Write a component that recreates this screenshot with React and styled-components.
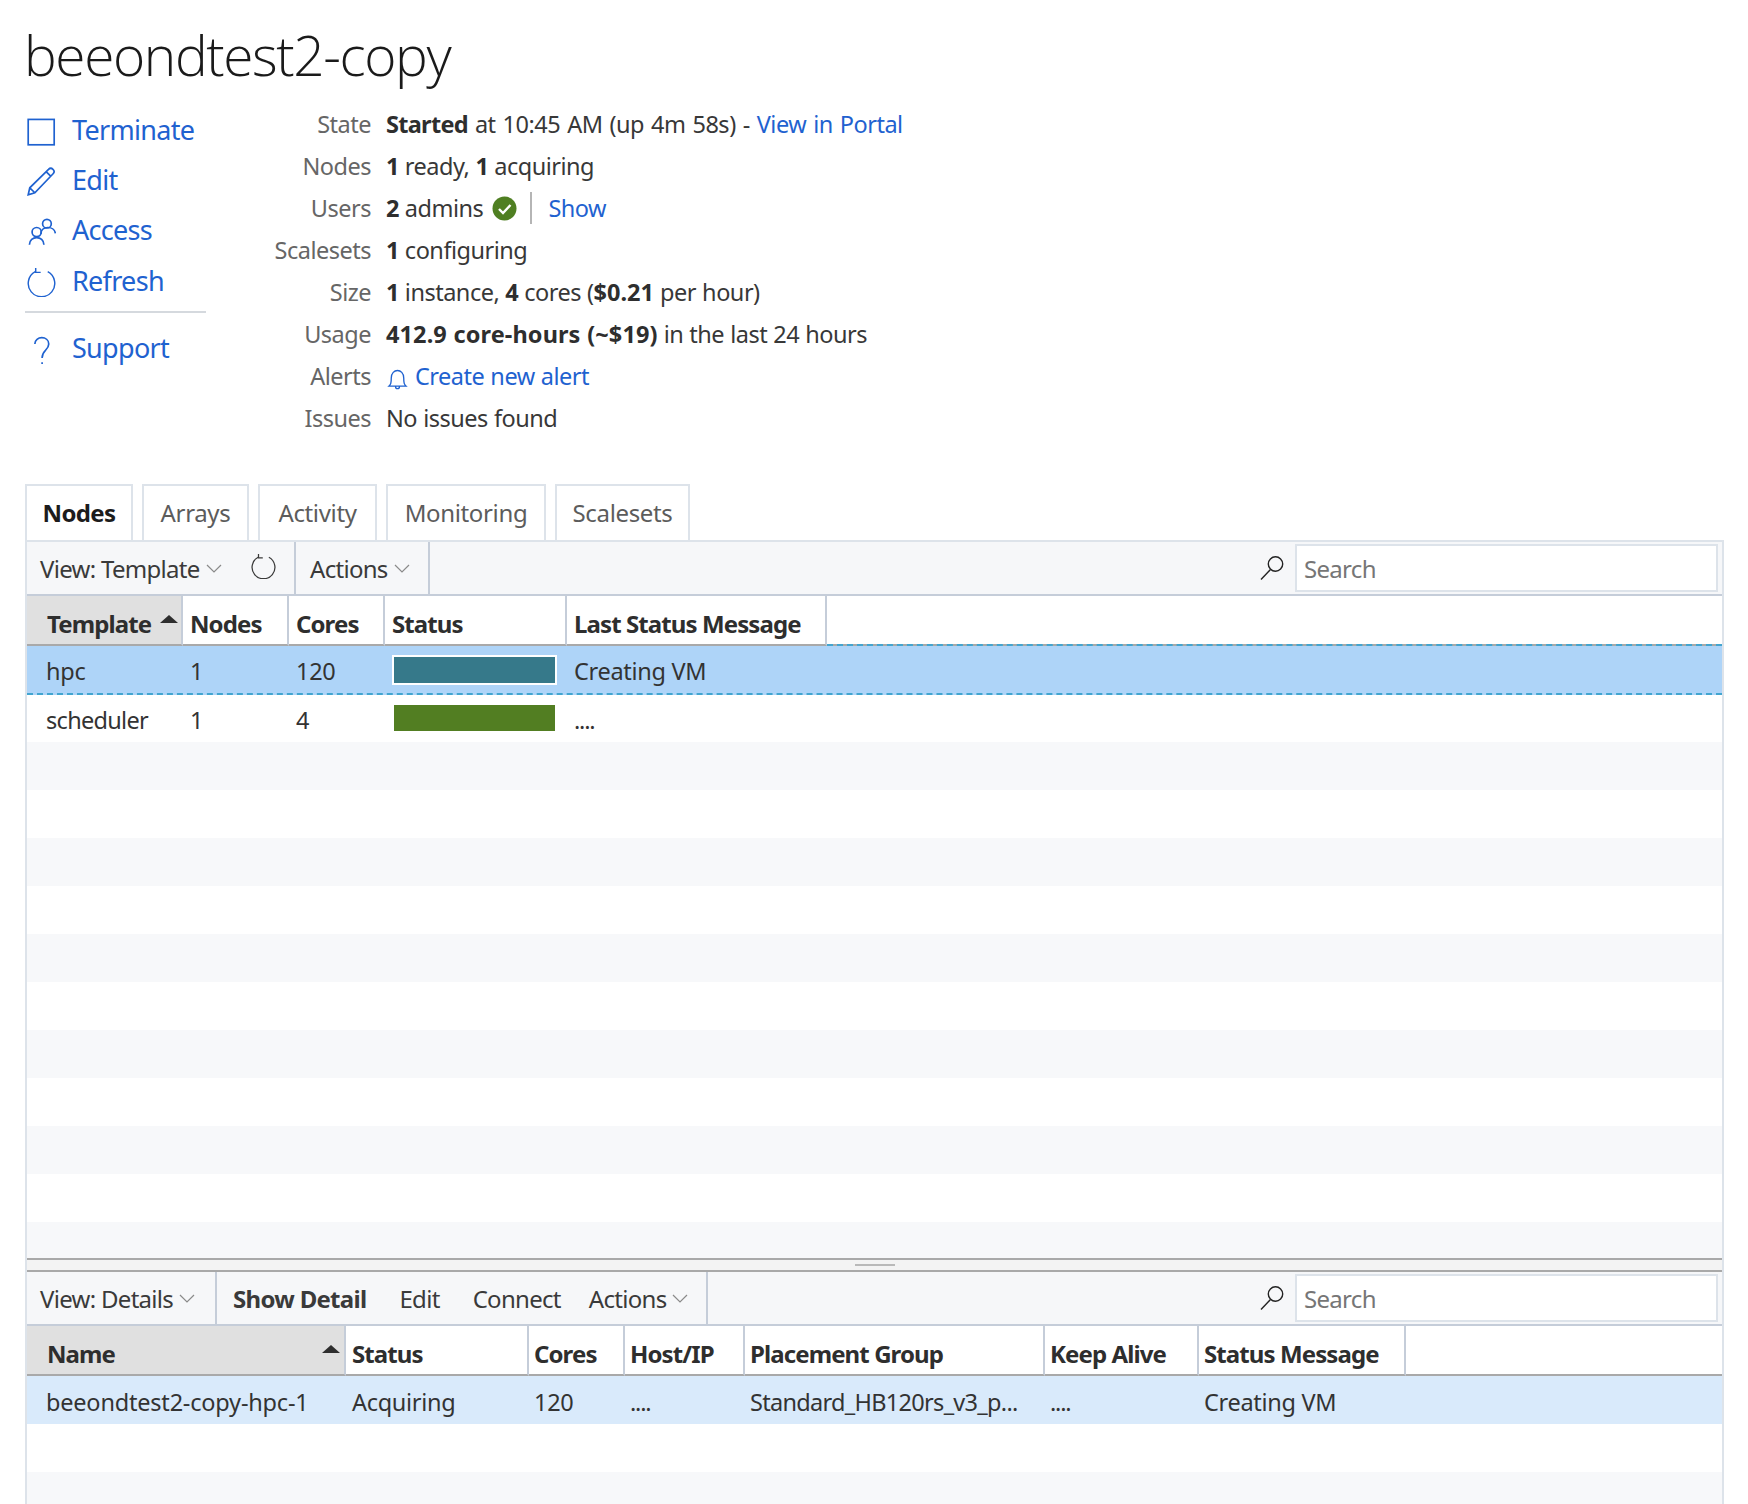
import React from 'react'
import styled, { createGlobalStyle } from 'styled-components'

const Global = createGlobalStyle`
  html, body { margin: 0; padding: 0; background: #fff; }
  body { font-family: "Noto Sans", "Open Sans", "Liberation Sans", sans-serif; color: #333; overflow: hidden; }
  * { box-sizing: border-box; }
`
const Page = styled.div`
  width: 1748px;
  height: 1504px;
  padding: 0 24px 0 25px;
  overflow: hidden;
`
const Title = styled.h1`
  margin: 0 0 0 -1px;
  height: 102px;
  padding-top: 17px;
  font-family: "Open Sans", sans-serif;
  font-size: 55px;
  line-height: 76px;
  font-weight: 300;
  letter-spacing: -1.4px;
  color: #1a1a1a;
`
const Summary = styled.div`
  display: flex;
  height: 382px;
`
const SideMenu = styled.div`
  width: 181px;
  padding-top: 2px;
`
const SideItem = styled.a`
  display: flex;
  align-items: center;
  gap: 16px;
  height: 50.4px;
  padding-left: 2px;
  font-size: 27px;
  letter-spacing: -0.7px;
  color: #1f62d0;
  svg { width: 29px; height: 29px; flex: none; margin-top: 4px; }
`
const SideRule = styled.div`
  height: 2px;
  margin: 5px 0 10px;
  background: #d5d9de;
`
const Props = styled.div`
  display: grid;
  grid-template-columns: 165px auto;
  grid-auto-rows: 42px;
  column-gap: 15px;
  justify-content: start;
  margin-top: 1px;
  font-size: 23.5px;
  letter-spacing: -0.5px;
  word-spacing: 0.5px;
  line-height: 42px;
`
const Label = styled.div`
  text-align: right;
  color: #666;
`
const Value = styled.div`
  display: flex;
  align-items: center;
  white-space: pre;
  color: #383838;
  word-spacing: ${p => p.$ws ?? 0.5}px;
`
const Strong = styled.b`
  font-weight: 700;
  color: #2e2e2e;
  letter-spacing: ${p => p.$ls ?? -0.7}px;
`
const Link = styled.a`
  color: #1f62d0;
`
const BellLink = styled.span`
  display: inline-flex;
  margin-right: 6px;
  margin-top: 4px;
  color: #1f62d0;
`
const UserCheck = styled.svg`
  margin-left: 3px;
`
const VBar = styled.span`
  display: inline-block;
  width: 2px;
  height: 32px;
  margin: 0 16px 0 13px;
  background: #b5b5b5;
`
const Tabs = styled.div`
  display: flex;
  gap: 9px;
  height: 56px;
`
const Tab = styled.div`
  width: ${p => p.$w}px;
  height: 56px;
  border: 2px solid #dde3ea;
  border-bottom: none;
  text-align: center;
  line-height: 54px;
  font-size: 24px;
  letter-spacing: ${p => (p.$active ? -0.6 : -0.35)}px;
  font-weight: ${p => (p.$active ? 700 : 400)};
  color: ${p => (p.$active ? '#1c1c1c' : '#5c5c5c')};
`
const Panel = styled.div`
  border-left: 2px solid #dde3ea;
  border-right: 2px solid #dde3ea;
  border-top: 2px solid #dde3ea;
`
const Toolbar = styled.div`
  display: flex;
  align-items: center;
  height: 54px;
  background: #f6f7f9;
  border-bottom: 2px solid #c5cdd9;
  font-size: 24px;
  letter-spacing: -0.7px;
  color: #3a3a3a;
`
const ToolGroup = styled.div`
  display: flex;
  align-items: center;
  height: 100%;
  width: ${p => p.$w}px;
  padding-left: ${p => p.$pad}px;
  gap: ${p => p.$gap || 0}px;
  border-right: 2px solid #c5cdd9;
`
const ToolItem = styled.span`
  display: inline-flex;
  align-items: center;
  margin-left: ${p => p.$ml || 0}px;
  font-weight: ${p => (p.$bold ? 700 : 400)};
  white-space: nowrap;
  svg { margin-left: 6px; }
`
const RefreshBtn = styled.span`
  display: inline-flex;
  margin-left: 29px;
  margin-top: -4px;
`
const SearchWrap = styled.div`
  margin-left: auto;
  display: flex;
  align-items: center;
  gap: 10px;
  padding-right: 4px;
`
const SearchBox = styled.div`
  width: 423px;
  height: 48px;
  border: 2px solid #dde3ea;
  background: #fff;
  padding-left: 7px;
  line-height: 46px;
  color: #767676;
`
const HeadRow = styled.div`
  display: flex;
  height: 50px;
`
const HeadCell = styled.div`
  position: relative;
  width: ${p => p.$w}px;
  flex: none;
  padding-left: ${p => p.$pad || 5}px;
  border-right: 2px solid #c5cdd9;
  border-bottom: 2px solid #a9a9a9;
  background: ${p => (p.$sorted ? '#e0e0e0' : '#fff')};
  font-size: 24px;
  letter-spacing: -0.9px;
  font-weight: 700;
  line-height: 56px;
  white-space: nowrap;
  color: #2e2e2e;
`
const SortMark = styled.span`
  position: absolute;
  right: ${p => p.$right}px;
  top: 19px;
  width: 0;
  height: 0;
  border-left: 9px solid transparent;
  border-right: 9px solid transparent;
  border-bottom: 8px solid #2e2e2e;
`
const HeadFill = styled.div`
  flex: 1;
  border-bottom: 2px ${p => (p.$dashed ? 'dashed #42a5d0' : 'solid #a9a9a9')};
  background: linear-gradient(#a9a9a9, #a9a9a9) bottom / 100% 2px no-repeat;
  background-origin: border-box;
`
const Body = styled.div`
  height: ${p => p.$h}px;
  overflow: hidden;
`
const Row = styled.div`
  position: relative;
  display: flex;
  align-items: center;
  height: ${p => (p.$dashed ? 49 : 48)}px;
  margin-bottom: ${p => (p.$dashed ? -1 : 0)}px;
  z-index: ${p => (p.$dashed ? 1 : 0)};
  background: ${p => p.$bg || '#fff'};
  font-size: 23.5px;
  letter-spacing: -0.3px;
  color: #333;
  border-bottom: ${p => (p.$dashed ? '2px dashed #42a5d0' : 'none')};
`
const Cell = styled.div`
  width: ${p => p.$w}px;
  flex: none;
  padding-left: ${p => p.$pad}px;
  padding-top: 3px;
  white-space: nowrap;
  letter-spacing: ${p => p.$ls ?? -0.3}px;
`
const BarCell = styled.div`
  width: ${p => p.$w}px;
  flex: none;
  padding-left: 9px;
`
const StatusBar = styled.div`
  width: 161px;
  height: 26px;
  background: ${p => p.$color};
  box-shadow: ${p => (p.$outlined ? '0 0 0 2px #fff' : 'none')};
`
const Splitter = styled.div`
  height: 14px;
  border-top: 2px solid #a9a9a9;
  border-bottom: 2px solid #a9a9a9;
  background: #f3f3f3;
  display: flex;
  justify-content: center;
  align-items: center;
`
const Grip = styled.div`
  width: 40px;
  height: 2px;
  background: #b9b9b9;
`

const Ico = ({ size = 24, children, sw = 1.4 }) => (
  <svg width={size} height={size} viewBox="0 0 24 24" fill="none" stroke="currentColor" strokeWidth={sw}>{children}</svg>
)
const Chevron = () => (
  <svg width="16" height="9" viewBox="0 0 16 9" fill="none" stroke="#8a8a8a" strokeWidth="1.2"><path d="M1 1l7 7 7-7" /></svg>
)
const Refresh = ({ size = 28 }) => (
  <svg width={size} height={size} viewBox="0 0 28 28" fill="none" stroke="currentColor" strokeWidth="1.4">
    <path d="M8 3.600A12.800 12.800 0 1 0 20 3.600" />
    <path d="M8.400 0v4.200h4.800" />
  </svg>
)
const Magnifier = () => (
  <svg width="26" height="26" viewBox="0 0 26 26" fill="none" stroke="#222" strokeWidth="1.4">
    <circle cx="16.5" cy="9" r="7.2" />
    <path d="M11.5 14.5L2 24.5" />
  </svg>
)

const side = [
  ['Terminate', <Ico key="t"><rect x="1" y="2" width="21.500" height="21" /></Ico>],
  ['Edit', <Ico key="e"><path d="M1 23l1.300-5.800L17.800 2a2.500 2.500 0 0 1 3.800 3.600L6.500 21.300zM2.300 17.200l4.200 4.100M16 4l4 4" /></Ico>],
  ['Access', <Ico key="a"><circle cx="16.500" cy="5.500" r="3.600" /><path d="M11.500 14c0-7 11-7 12-.500" /><circle cx="8" cy="12.500" r="3.800" /><path d="M2 23c0-8 12-8 12 0" /></Ico>],
  ['Refresh', <Refresh key="r" />],
]

const topCols = [156, 106, 96, 182, 260]
const bottomCols = [319, 183, 96, 120, 300, 154, 207]

const App = () => (
  <Page>
    <Global />
    <Title>beeondtest2-copy</Title>
    <Summary>
      <SideMenu>
        {side.map(([name, icon]) => (
          <SideItem key={name}>{icon}{name}</SideItem>
        ))}
        <SideRule />
        <SideItem>
          <Ico><path d="M6.500 7.500C6.500 .500 18 .500 18 7.500c0 5-5.500 5-5.500 11.500M12.500 22.500v1.500" /></Ico>
          Support
        </SideItem>
      </SideMenu>
      <Props>
        <Label>State</Label>
        <Value $ws={1.4}><Strong>Started</Strong> at 10:45 AM (up 4m 58s) - <Link>View in Portal</Link></Value>
        <Label>Nodes</Label>
        <Value><Strong>1</Strong> ready, <Strong>1</Strong> acquiring</Value>
        <Label>Users</Label>
        <Value>
          <Strong>2</Strong> admins{' '}
          <UserCheck width="25" height="25" viewBox="0 0 25 25">
            <circle cx="12.500" cy="12.500" r="12" fill="#4f7f22" />
            <path d="M7 13l4 4 7.500-8" fill="none" stroke="#fff" strokeWidth="2.400" />
          </UserCheck>
          <VBar /><Link>Show</Link>
        </Value>
        <Label>Scalesets</Label>
        <Value><Strong>1</Strong> configuring</Value>
        <Label>Size</Label>
        <Value><Strong>1</Strong> instance, <Strong>4</Strong> cores (<Strong $ls={0}>$0.21</Strong> per hour)</Value>
        <Label>Usage</Label>
        <Value><Strong $ls={0.1}>412.9 core-hours (~$19)</Strong> in the last 24 hours</Value>
        <Label>Alerts</Label>
        <Value>
          <BellLink>
            <Ico size={23} sw={1.4}><path d="M3 20h18c-2-2-2.500-3-2.500-8.500C18.500 1 5.500 1 5.500 11.500 5.500 17 5 18 3 20zM10 20.500a2 2 0 0 0 4 0" /></Ico>
          </BellLink>
          <Link>Create new alert</Link>
        </Value>
        <Label>Issues</Label>
        <Value>No issues found</Value>
      </Props>
    </Summary>

    <Tabs>
      <Tab $w={108} $active>Nodes</Tab>
      <Tab $w={107}>Arrays</Tab>
      <Tab $w={119}>Activity</Tab>
      <Tab $w={160}>Monitoring</Tab>
      <Tab $w={135}>Scalesets</Tab>
    </Tabs>

    <Panel>
      <Toolbar>
        <ToolGroup $w={269} $pad={13}>
          <ToolItem>View: Template<Chevron /></ToolItem>
          <RefreshBtn><Refresh size={25} /></RefreshBtn>
        </ToolGroup>
        <ToolGroup $w={134} $pad={14}>
          <ToolItem>Actions<Chevron /></ToolItem>
        </ToolGroup>
        <SearchWrap><Magnifier /><SearchBox>Search</SearchBox></SearchWrap>
      </Toolbar>
      <HeadRow>
        <HeadCell $w={topCols[0]} $sorted $pad={20}>Template<SortMark $right={3} /></HeadCell>
        <HeadCell $w={topCols[1]} $pad={7}>Nodes</HeadCell>
        <HeadCell $w={topCols[2]} $pad={7}>Cores</HeadCell>
        <HeadCell $w={topCols[3]} $pad={7}>Status</HeadCell>
        <HeadCell $w={topCols[4]} $pad={7}>Last Status Message</HeadCell>
        <HeadFill $dashed />
      </HeadRow>
      <Body $h={612}>
        <Row $bg="#aed4f8" $dashed>
          <Cell $w={topCols[0]} $pad={19}>hpc</Cell>
          <Cell $w={topCols[1]} $pad={7}>1</Cell>
          <Cell $w={topCols[2]} $pad={7}>120</Cell>
          <BarCell $w={topCols[3]}><StatusBar $color="#36798a" $outlined /></BarCell>
          <Cell $w={topCols[4]} $pad={7}>Creating VM</Cell>
        </Row>
        <Row>
          <Cell $w={topCols[0]} $pad={19} $ls={-0.7}>scheduler</Cell>
          <Cell $w={topCols[1]} $pad={7}>1</Cell>
          <Cell $w={topCols[2]} $pad={7}>4</Cell>
          <BarCell $w={topCols[3]}><StatusBar $color="#527e22" /></BarCell>
          <Cell $w={topCols[4]} $pad={7} $ls={-1.2}>....</Cell>
        </Row>
        {Array.from({ length: 11 }, (_, i) => (
          <Row key={i} $bg={i % 2 === 0 ? '#f7f8fa' : '#fff'} />
        ))}
      </Body>
      <Splitter><Grip /></Splitter>
      <Toolbar>
        <ToolGroup $w={190} $pad={13}>
          <ToolItem>View: Details<Chevron /></ToolItem>
        </ToolGroup>
        <ToolGroup $w={491} $pad={16} $gap={33}>
          <ToolItem $bold>Show Detail</ToolItem>
          <ToolItem>Edit</ToolItem>
          <ToolItem>Connect</ToolItem>
          <ToolItem $ml={-5}>Actions<Chevron /></ToolItem>
        </ToolGroup>
        <SearchWrap><Magnifier /><SearchBox>Search</SearchBox></SearchWrap>
      </Toolbar>
      <HeadRow>
        <HeadCell $w={bottomCols[0]} $sorted $pad={20}>Name<SortMark $right={4} /></HeadCell>
        <HeadCell $w={bottomCols[1]} $pad={6}>Status</HeadCell>
        <HeadCell $w={bottomCols[2]} $pad={5}>Cores</HeadCell>
        <HeadCell $w={bottomCols[3]} $pad={5}>Host/IP</HeadCell>
        <HeadCell $w={bottomCols[4]} $pad={5}>Placement Group</HeadCell>
        <HeadCell $w={bottomCols[5]} $pad={5}>Keep Alive</HeadCell>
        <HeadCell $w={bottomCols[6]} $pad={5}>Status Message</HeadCell>
        <HeadFill />
      </HeadRow>
      <Body $h={130}>
        <Row $bg="#d9eafb">
          <Cell $w={bottomCols[0]} $pad={19} $ls={-0.2}>beeondtest2-copy-hpc-1</Cell>
          <Cell $w={bottomCols[1]} $pad={6}>Acquiring</Cell>
          <Cell $w={bottomCols[2]} $pad={5}>120</Cell>
          <Cell $w={bottomCols[3]} $pad={5} $ls={-1.2}>....</Cell>
          <Cell $w={bottomCols[4]} $pad={5} $ls={-0.7}>Standard_HB120rs_v3_p...</Cell>
          <Cell $w={bottomCols[5]} $pad={5} $ls={-1.2}>....</Cell>
          <Cell $w={bottomCols[6]} $pad={5}>Creating VM</Cell>
        </Row>
        <Row />
        <Row $bg="#f7f8fa" />
      </Body>
    </Panel>
  </Page>
)

export default App
